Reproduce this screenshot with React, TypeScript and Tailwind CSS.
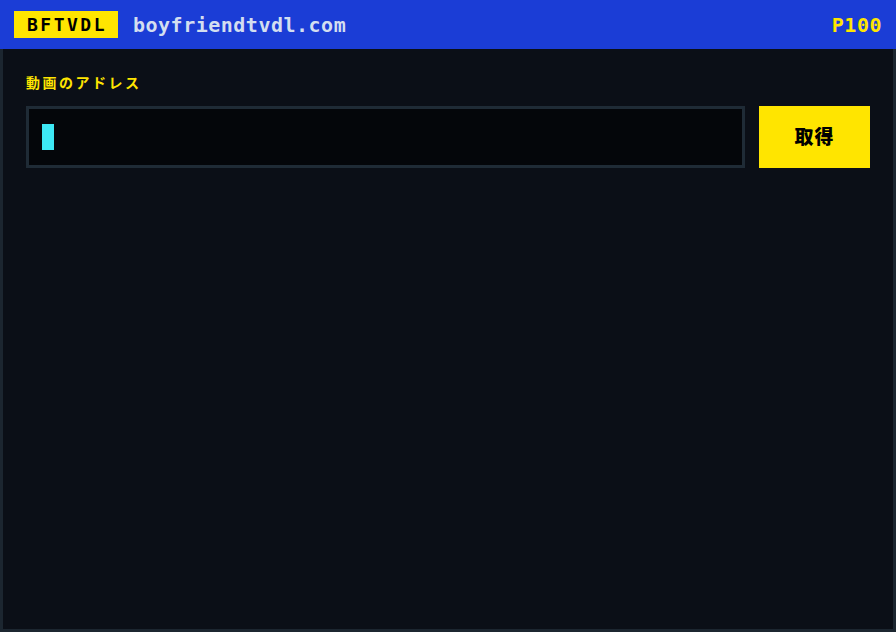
export default function App() {
  const mono = { fontFamily: '"DejaVu Sans Mono", "Liberation Mono", monospace' };
  const jp = { fontFamily: '"Noto Sans CJK JP", "Noto Sans", sans-serif' };

  return (
    <div className="w-[896px] h-[632px] flex flex-col bg-[#0b0f17]">
      <header className="h-[49px] shrink-0 bg-[#1b3dd6] flex items-center pl-[14px] pr-[14px]" style={mono}>
        <div className="h-[27px] w-[104px] bg-[#ffe500] flex items-center justify-center text-black font-bold text-[18px] tracking-[2.5px] pl-[2px]">
          BFTVDL
        </div>
        <div className="ml-[15px] text-[#d3def0] font-bold text-[20px] tracking-[0.5px]">
          boyfriendtvdl.com
        </div>
        <div className="ml-auto text-[#ffe500] font-bold text-[20px] tracking-[0.5px]">P100</div>
      </header>
      <main className="flex-1 border-[3px] border-t-0 border-[#1c2630] px-[23px] pt-[23px]">
        <label className="block text-[#ffe500] font-bold text-[14px] tracking-[2.5px] leading-[20px]" style={jp}>
          動画のアドレス
        </label>
        <div className="mt-[14px] flex gap-[14px]">
          <div className="flex-1 h-[62px] border-[3px] border-[#1f2b36] bg-[#04060a] flex items-center pl-[13px]">
            <span className="w-[12px] h-[26px] bg-[#3de8f5]" />
          </div>
          <button
            className="w-[111px] h-[62px] bg-[#ffe500] text-black font-black text-[19px] tracking-[1px] leading-none pb-[4px]"
            style={jp}
          >
            取得
          </button>
        </div>
      </main>
    </div>
  );
}
